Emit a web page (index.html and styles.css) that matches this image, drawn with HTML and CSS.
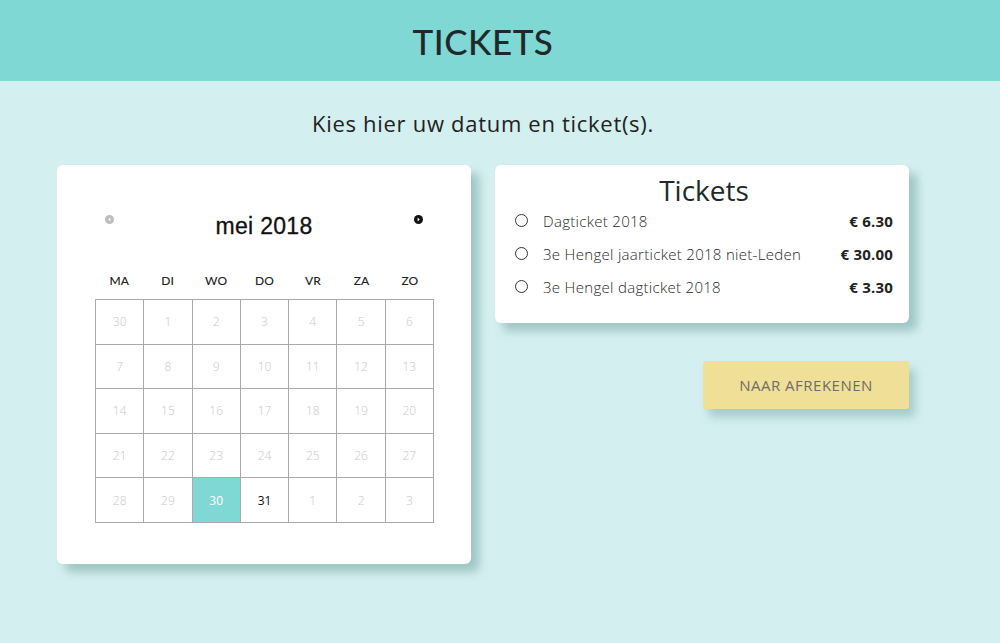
FILE: index.html
```html
<!DOCTYPE html>
<html lang="nl">
<head>
<meta charset="utf-8">
<title>Tickets</title>
<link rel="stylesheet" href="styles.css">
</head>
<body>
<header class="topbar">
  <h1 class="topbar-title">TICKETS</h1>
</header>
<main class="page">
  <p class="intro">Kies hier uw datum en ticket(s).</p>
  <div class="columns">
    <section class="card calendar">
      <div class="cal-head">
        <span class="cal-nav cal-prev"><svg width="9" height="9" viewBox="0 0 10 10"><circle cx="5" cy="5" r="5" fill="#bdbdbd"/><path d="M6 2.8 L3.6 5 L6 7.2Z" fill="#fff"/></svg></span>
        <span class="cal-month">mei 2018</span>
        <span class="cal-nav cal-next"><svg width="9" height="9" viewBox="0 0 10 10"><circle cx="5" cy="5" r="5" fill="#111"/><path d="M4 2.8 L6.4 5 L4 7.2Z" fill="#fff"/></svg></span>
      </div>
      <div class="weekdays">
        <span>MA</span><span>DI</span><span>WO</span><span>DO</span><span>VR</span><span>ZA</span><span>ZO</span>
      </div>
      <div class="days">
        <span class="day">30</span><span class="day">1</span><span class="day">2</span><span class="day">3</span><span class="day">4</span><span class="day">5</span><span class="day">6</span>
        <span class="day">7</span><span class="day">8</span><span class="day">9</span><span class="day">10</span><span class="day">11</span><span class="day">12</span><span class="day">13</span>
        <span class="day">14</span><span class="day">15</span><span class="day">16</span><span class="day">17</span><span class="day">18</span><span class="day">19</span><span class="day">20</span>
        <span class="day">21</span><span class="day">22</span><span class="day">23</span><span class="day">24</span><span class="day">25</span><span class="day">26</span><span class="day">27</span>
        <span class="day">28</span><span class="day">29</span><span class="day selected">30</span><span class="day active">31</span><span class="day">1</span><span class="day">2</span><span class="day">3</span>
      </div>
    </section>
    <div class="side">
      <section class="card tickets">
        <h2 class="tickets-title">Tickets</h2>
        <ul class="ticket-list">
          <li class="ticket"><span class="radio"></span><span class="ticket-name">Dagticket 2018</span><span class="ticket-price">€ 6.30</span></li>
          <li class="ticket"><span class="radio"></span><span class="ticket-name">3e Hengel jaarticket 2018 niet-Leden</span><span class="ticket-price">€ 30.00</span></li>
          <li class="ticket"><span class="radio"></span><span class="ticket-name">3e Hengel dagticket 2018</span><span class="ticket-price">€ 3.30</span></li>
        </ul>
      </section>
      <div class="actions">
        <button class="checkout">NAAR AFREKENEN</button>
      </div>
    </div>
  </div>
</main>
</body>
</html>
```
FILE: styles.css
```css
* { box-sizing: border-box; }
html, body { margin: 0; padding: 0; }
body {
  background: #d4efef;
  font-family: "Open Sans", Lato, sans-serif;
  color: #222;
  height: 643px;
  overflow: hidden;
}
.topbar {
  background: #7fd8d4;
  height: 81px;
  display: flex;
  align-items: center;
  justify-content: center;
  padding-right: 34px;
}
.topbar-title {
  margin: 0;
  font-family: Lato, "Open Sans", sans-serif;
  font-size: 35px;
  font-weight: 500;
  color: #1e2a2a;
  letter-spacing: 0.5px;
}
.page {
  width: 852px;
  margin-left: 57px;
}
.intro {
  margin: 28px 0 0;
  text-align: center;
  font-size: 22px;
  line-height: 28px;
  letter-spacing: 0.7px;
  color: #222;
}
.columns {
  display: flex;
  gap: 24px;
  margin-top: 28px;
  align-items: flex-start;
}
.card {
  background: #fff;
  border-radius: 6px;
  box-shadow: 8px 8px 10px rgba(60, 120, 120, 0.35);
}
.calendar {
  width: 414px;
  height: 399px;
  padding: 46px 38px 0;
}
.cal-head {
  display: flex;
  align-items: flex-start;
  justify-content: space-between;
  padding: 2px 10px 0 10px;
  height: 40px;
}
.cal-nav { display: block; line-height: 0; margin-top: 2px; }
.cal-month {
  font-family: "Liberation Sans", Arial, sans-serif;
  font-size: 23px;
  line-height: 26px;
  color: #111;
  margin-top: 0;
  letter-spacing: 0.3px;
  -webkit-text-stroke: 0.3px #111;
}
.weekdays {
  margin-top: 22px;
  display: grid;
  grid-template-columns: repeat(7, 1fr);
  text-align: center;
  font-family: Lato, "Open Sans", sans-serif;
  font-size: 12px;
  font-weight: 500;
  color: #222;
  height: 26px;
  width: 339px;
}
.days {
  display: grid;
  grid-template-columns: repeat(7, 1fr);
  grid-auto-rows: 44.6px;
  width: 339px;
  border-top: 1px solid #aaa;
  border-left: 1px solid #aaa;
}
.day {
  display: flex;
  align-items: center;
  justify-content: center;
  border-right: 1px solid #aaa;
  border-bottom: 1px solid #aaa;
  font-size: 12px;
  color: #c8c8c8;
  font-weight: 300;
}
.day.selected { background: #7fd8d4; color: #fff; font-weight: 400; }
.day.active { color: #111; font-weight: 400; }
.side { width: 414px; }
.tickets {
  height: 158px;
  padding: 11px 16px 0 20px;
}
.tickets-title {
  margin: 0;
  text-align: center;
  font-size: 28px;
  font-weight: 500;
  line-height: 28px;
  color: #1e2a2a;
}
.ticket-list {
  list-style: none;
  margin: 0;
  padding: 0;
}
.ticket {
  display: flex;
  align-items: center;
  height: 33px;
  font-size: 15px;
}
.radio {
  width: 13px;
  height: 13px;
  border: 1.5px solid #333;
  border-radius: 50%;
  margin-right: 15px;
}
.ticket-name { flex: 1; font-weight: 300; color: #2a2a2a; letter-spacing: 0.3px; }
.ticket-price { font-weight: 700; color: #222; letter-spacing: 0.2px; }
.actions {
  display: flex;
  justify-content: flex-end;
  margin-top: 38px;
}
.checkout {
  width: 206px;
  height: 48px;
  border: none;
  border-radius: 3px;
  background: #f0df96;
  color: #6a6e6c;
  font-family: "Open Sans", Lato, sans-serif;
  font-size: 15px;
  letter-spacing: 0.5px;
  box-shadow: 6px 8px 10px rgba(60, 120, 120, 0.3);
}
```
